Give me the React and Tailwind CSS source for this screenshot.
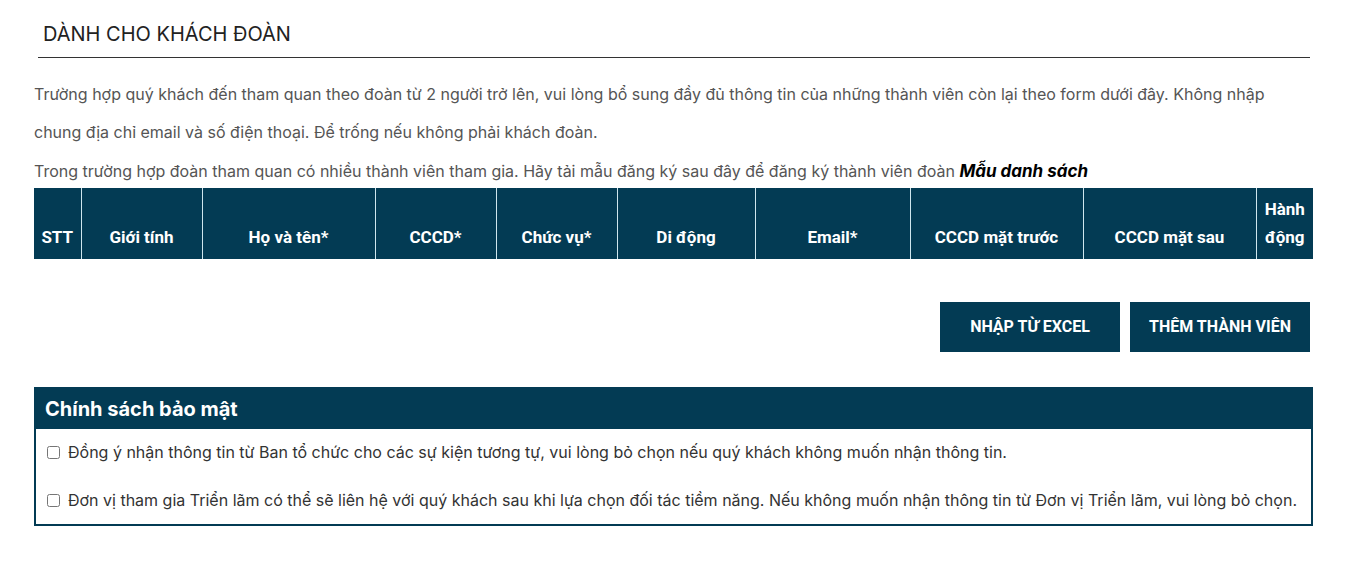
import React from 'react';

const columns = [
  { label: 'STT', width: 47 },
  { label: 'Giới tính', width: 121 },
  { label: 'Họ và tên*', width: 173 },
  { label: 'CCCD*', width: 121 },
  { label: 'Chức vụ*', width: 121 },
  { label: 'Di động', width: 138 },
  { label: 'Email*', width: 155 },
  { label: 'CCCD mặt trước', width: 173 },
  { label: 'CCCD mặt sau', width: 173 },
  { label: 'Hành động', width: 57 },
];

const policies = [
  'Đồng ý nhận thông tin từ Ban tổ chức cho các sự kiện tương tự, vui lòng bỏ chọn nếu quý khách không muốn nhận thông tin.',
  'Đơn vị tham gia Triển lãm có thể sẽ liên hệ với quý khách sau khi lựa chọn đối tác tiềm năng. Nếu không muốn nhận thông tin từ Đơn vị Triển lãm, vui lòng bỏ chọn.',
];

const App = () => {
  return (
    <div className="min-h-[561px] bg-white font-['Inter','Liberation_Sans',sans-serif]">
      <div className="ml-[34px] w-[1279px] pt-[20px]">
        {/* Section heading */}
        <div className="ml-[4px] w-[1272px] border-b border-[#333] pb-[9px]">
          <h2 className="pl-[5px] text-[20px] leading-[28px] text-[#222]">DÀNH CHO KHÁCH ĐOÀN</h2>
        </div>

        {/* Intro text */}
        <div className="mt-[17px] text-[16px] leading-[38px] text-[#555]">
          <p>
            Trường hợp quý khách đến tham quan theo đoàn từ 2 người trở lên, vui lòng bổ sung đầy đủ thông tin của những thành viên còn lại theo form dưới đây. Không nhập chung địa chỉ email và số điện thoại. Để trống nếu không phải khách đoàn.
          </p>
          <p className="mt-[8px] leading-[24px]">
            Trong trường hợp đoàn tham quan có nhiều thành viên tham gia. Hãy tải mẫu đăng ký sau đây để đăng ký thành viên đoàn{' '}
            <a className="text-[17px] font-bold italic text-black">Mẫu danh sách</a>
          </p>
        </div>

        {/* Members table */}
        <table className="mt-[5px] w-[1279px] table-fixed border-collapse font-['Roboto','Liberation_Sans',sans-serif]">
          <colgroup>
            {columns.map((c) => (
              <col key={c.label} style={{ width: c.width }} />
            ))}
          </colgroup>
          <thead>
            <tr className="h-[71px] bg-[#033b54] text-white">
              {columns.map((c) => (
                <th
                  key={c.label}
                  className="border-x border-[#cfe6ee] px-[6px] pt-[6px] pb-[8px] align-bottom text-center text-[17px] font-bold leading-[28px] first:border-l-0 last:border-r-0"
                >
                  {c.label}
                </th>
              ))}
            </tr>
          </thead>
        </table>

        {/* Actions */}
        <div className="mt-[43px] flex justify-end gap-[10px] pr-[3px] font-['Roboto','Liberation_Sans',sans-serif]">
          <button className="h-[50px] w-[180px] bg-[#033b54] text-[16px] font-bold text-white">NHẬP TỪ EXCEL</button>
          <button className="h-[50px] w-[180px] bg-[#033b54] text-[16px] font-bold text-white">THÊM THÀNH VIÊN</button>
        </div>

        {/* Privacy policy */}
        <div className="mt-[35px] border-2 border-t-0 border-[#033b54]">
          <div className="flex h-[42px] items-center bg-[#033b54] px-[9px] pt-[2px]">
            <h3 className="text-[20px] font-bold text-white">Chính sách bảo mật</h3>
          </div>
          <div className="-mt-[1px]">
            {policies.map((text) => (
              <label key={text} className="flex h-[48px] items-center gap-[8px] pl-[11px] text-[16px] text-[#333]">
                <input type="checkbox" className="h-[13px] w-[13px]" />
                <span>{text}</span>
              </label>
            ))}
          </div>
        </div>
      </div>
    </div>
  );
};

export default App;
